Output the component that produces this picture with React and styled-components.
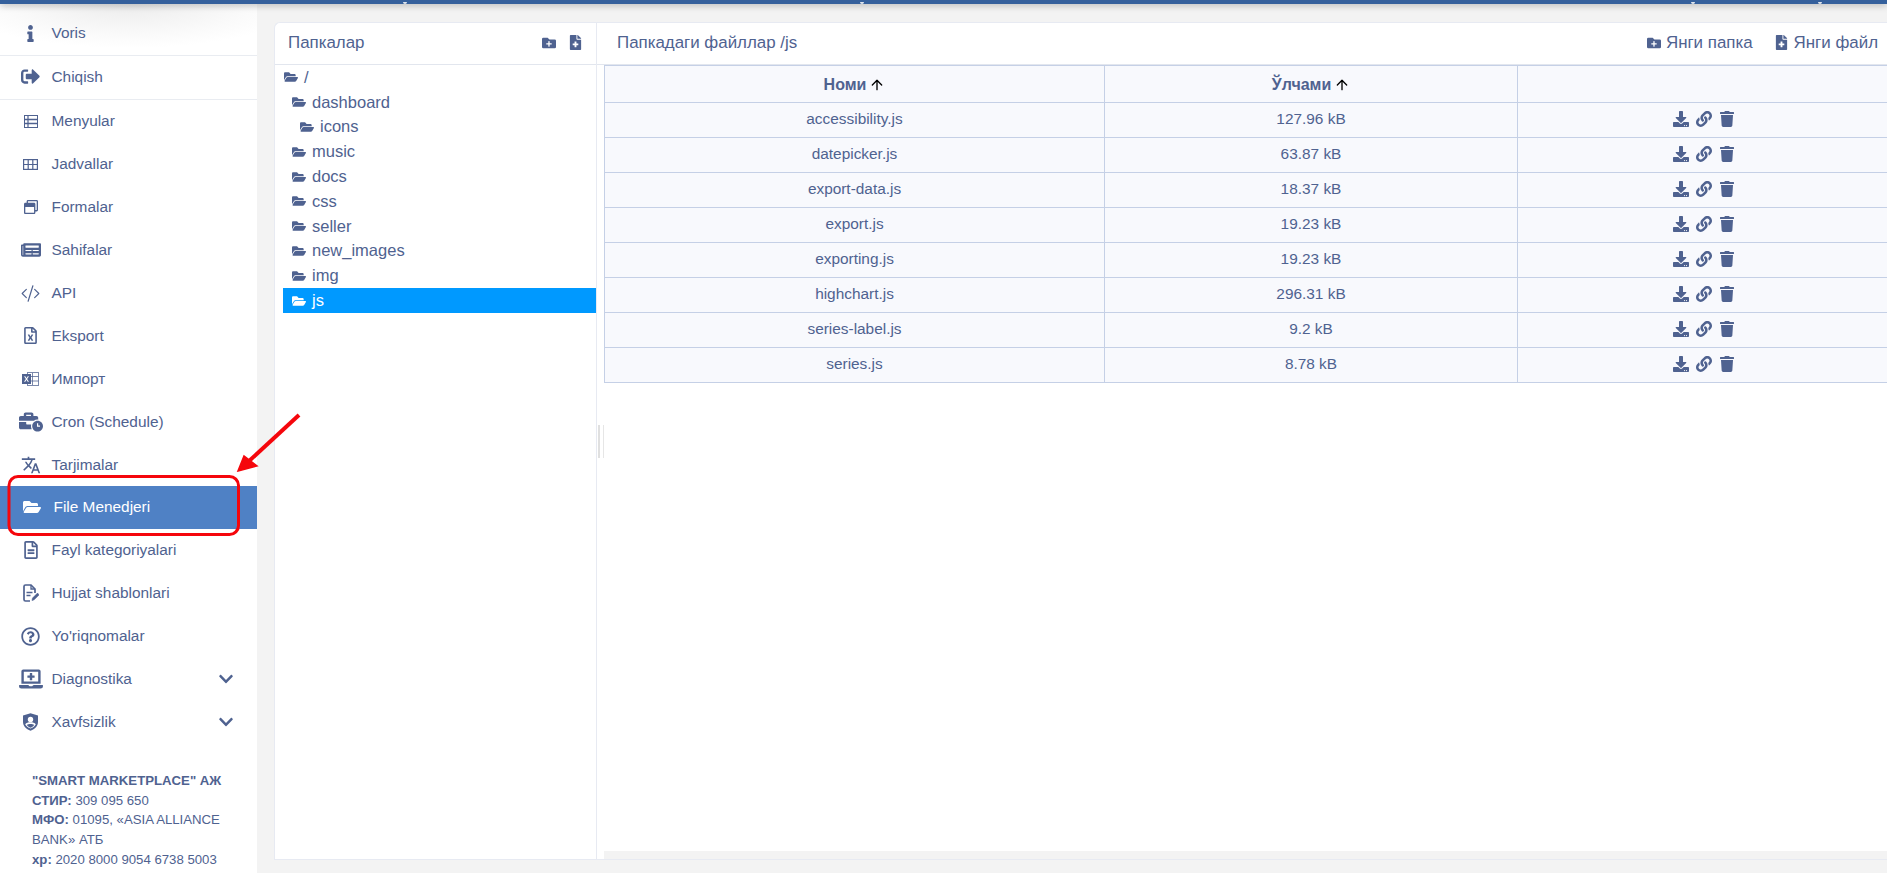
import React from "react";
import styled, { createGlobalStyle } from "styled-components";
import {
  FaInfo, FaRegWindowRestore, FaNewspaper, FaRegFileExcel, FaBusinessTime,
  FaFolderOpen, FaRegFileAlt, FaRegQuestionCircle, FaLaptopMedical, FaChevronDown,
  FaFolderPlus, FaFileMedical, FaDownload, FaLink, FaTrash, FaSignOutAlt,
} from "react-icons/fa";
import { BsCodeSlash } from "react-icons/bs";
import { MdTranslate } from "react-icons/md";
import { LuArrowUp } from "react-icons/lu";

const INK = "#4f6290";

const GlobalStyle = createGlobalStyle`
  html, body { margin: 0; height: 100%; overflow: hidden; background: #f3f3f3; }
  body { font-family: "Liberation Sans", Arial, sans-serif; color: ${INK}; }
  * { box-sizing: border-box; }
`;

const Page = styled.div`
  position: relative;
  display: flex;
  flex-direction: column;
  width: 1887px;
  height: 873px;
  overflow: hidden;
`;

const TopBar = styled.div`
  height: 4px;
  flex: none;
  background: #35609c;
  box-shadow: 0 1px 7px rgba(0, 0, 0, 0.35);
  position: relative;
  z-index: 2;
`;

const TopBarDot = styled.span`
  position: absolute;
  left: ${({ $left }) => $left}px;
  top: 2px;
  width: 4px;
  height: 2px;
  border-radius: 0 0 2px 2px;
  background: #dfe5ee;
`;

const Body = styled.div`
  flex: 1;
  display: flex;
  min-height: 0;
`;

const Sidebar = styled.aside`
  width: 257px;
  flex: none;
  background: #fff;
  display: flex;
  flex-direction: column;
`;

const MenuRow = styled.div`
  display: flex;
  align-items: center;
  flex: none;
  height: ${({ $tall }) => ($tall ? "44px" : "42.9px")};
  padding-left: 18px;
  padding-right: 23px;
  padding-bottom: ${({ $tall }) => ($tall ? "2px" : "0")};
  font-size: 15.4px;
  color: ${({ $active }) => ($active ? "#fff" : INK)};
  background: ${({ $active }) => ($active ? "#4f81c5" : "transparent")};
  border-bottom: ${({ $tall }) => ($tall ? "1px solid #e9ecf1" : "none")};
`;

const TopMenuRow = styled(MenuRow)`
  height: 52px;
  padding-top: 9px;
  background: radial-gradient(ellipse 170px 44px at 50% 0, #ececec 0%, #fafafa 70%, #fff 100%);
`;

const MenuIcon = styled.span`
  width: 33.5px;
  flex: none;
  display: flex;
  justify-content: ${({ $active }) => ($active ? "flex-start" : "center")};
  padding-right: 8px;
  padding-left: ${({ $active }) => ($active ? "5px" : "0")};
  font-size: ${({ $size }) => $size || 16}px;
`;

const MenuLabel = styled.span`
  flex: 1;
  margin-left: ${({ $active }) => ($active ? "2px" : "0")};
`;

const SidebarFooter = styled.div`
  padding: 27.5px 20px 0 32px;
  font-size: 13.2px;
  line-height: 19.75px;
  b { font-weight: 700; }
`;

const Main = styled.main`
  flex: 1;
  min-width: 0;
  padding: 18px 0 13px 17px;
`;

const Card = styled.div`
  height: 100%;
  display: flex;
  background: #fff;
  border: 1px solid #e7eaf2;
  border-right: none;
  border-radius: 6px 0 0 0;
`;

const TreePanel = styled.section`
  width: 322px;
  flex: none;
  border-right: 1px solid #e7eaf2;
`;

const FilesPanel = styled.section`
  position: relative;
  flex: 1;
  min-width: 0;
  display: flex;
  flex-direction: column;
`;

const PanelHeader = styled.header`
  height: 42px;
  flex: none;
  display: flex;
  align-items: center;
  justify-content: space-between;
  font-size: 16.9px;
  border-bottom: 1px solid #e2e6ee;
  padding: ${({ $wide }) => ($wide ? "0 9px 2px 20px" : "0 13px 2px 13px")};
`;

const HeaderTools = styled.div`
  display: flex;
  align-items: center;
  gap: ${({ $wide }) => ($wide ? "21px" : "12px")};
`;

const HeaderTool = styled.span`
  display: flex;
  align-items: center;
  gap: 5px;
  font-size: 16.9px;
`;

const Tree = styled.ul`
  list-style: none;
  margin: 0;
  padding: 0 0 0 8px;
`;

const TreeItem = styled.li`
  display: flex;
  align-items: center;
  gap: 6px;
  height: 24.8px;
  padding-left: ${({ $level }) => $level * 8 + 1}px;
  font-size: 16.5px;
  color: ${({ $selected }) => ($selected ? "#fff" : INK)};
  background: ${({ $selected }) => ($selected ? "#0099ff" : "transparent")};
  svg { font-size: 14px; flex: none; }
`;

const TableWrap = styled.div`
  flex: 1;
  min-height: 0;
  padding-left: 7px;
  overflow: hidden;
`;

const FilesTable = styled.table`
  width: 1287px;
  table-layout: fixed;
  border-collapse: collapse;
  background: #f8f9fd;
  font-size: 15.4px;
  th, td { border: 1px solid #c5d0e6; text-align: center; }
  th { height: 37px; font-size: 16px; font-weight: 700; padding: 1px 0 0; }
  td { height: 35px; padding: 0 0 3px; }
`;

const SortArrow = styled(LuArrowUp)`
  color: #000;
  font-size: 16px;
  vertical-align: -3px;
  margin-left: 3px;
`;

const RowActions = styled.div`
  display: flex;
  justify-content: center;
  align-items: center;
  gap: 7px;
  font-size: 16px;
`;

const BottomScroll = styled.div`
  position: absolute;
  left: 7px;
  right: 0;
  bottom: 0;
  height: 8px;
  background: #f3f3f3;
`;

const Splitter = styled.div`
  position: absolute;
  left: 0;
  top: 402px;
  width: 6px;
  height: 33px;
  border-left: 2px solid #e0e0e0;
  border-right: 1px solid #e6e6e6;
  margin-left: 1px;
`;

const Annotation = styled.svg`
  position: absolute;
  left: 0;
  top: 0;
  pointer-events: none;
  z-index: 3;
`;

const RowsIcon = () => (
  <svg width="14" height="13" viewBox="0 0 14 13" fill="none" stroke="currentColor">
    <rect x="0.5" y="0.5" width="13" height="12" strokeWidth="1" />
    <path d="M0.5 4.5h13M0.5 8.5h13" strokeWidth="1.4" />
    <path d="M4 1v11" strokeWidth="1.2" />
  </svg>
);

const GridIcon = () => (
  <svg width="15" height="11" viewBox="0 0 15 11" fill="none" stroke="currentColor" strokeWidth="1.2">
    <rect x="0.6" y="0.6" width="13.8" height="9.8" />
    <path d="M0.6 5.5h13.8M5.2 0.6v9.8M9.8 0.6v9.8" />
  </svg>
);

const SheetIcon = () => (
  <svg width="17" height="14" viewBox="0 0 17 14" fill="none">
    <rect x="5.5" y="0.5" width="11" height="13" stroke="currentColor" strokeOpacity="0.75" />
    <path d="M10.5 1v12M6 4.5h10.5M6 9h10.5" stroke="currentColor" strokeOpacity="0.75" />
    <rect y="2" width="9" height="10" fill="currentColor" />
    <path d="M2.6 4.3l3.8 5.4M6.4 4.3L2.6 9.7" stroke="#fff" strokeWidth="1.1" />
  </svg>
);

const DocPenIcon = () => (
  <svg width="16" height="18" viewBox="0 0 16 18" fill="none" stroke="currentColor">
    <path d="M12 9V5L8 1H2.5A1.5 1.5 0 0 0 1 2.5v13A1.5 1.5 0 0 0 2.5 17H7" strokeWidth="1.7" />
    <path d="M8 1v4h4" strokeWidth="1.3" />
    <path d="M3.5 8.5h6M3.5 11.5h4" strokeWidth="1.3" />
    <path d="M9 16.5l.5-2.4 5-5 1.6 1.7-5 5z" fill="currentColor" strokeWidth="0.6" />
  </svg>
);

const ShieldIcon = () => (
  <svg width="15" height="18" viewBox="0 0 15 18">
    <path d="M7.5 0.3L15 2.6v6.2c0 4.2-3 7.4-7.5 9C3 16.2 0 13 0 8.8V2.6z" fill="currentColor" />
    <circle cx="7.5" cy="6.5" r="2.7" fill="#fff" />
    <path d="M2.2 11.3c1.2-1.4 3-2 5.3-2s4.100.6 5.300 2c-.8 1.900-2.800 3.400-5.300 4.300-2.500-.9-4.500-2.400-5.300-4.300z" fill="#fff" />
    <path d="M3.800 12c1-.8 2.200-1.100 3.700-1.100s2.700.3 3.700 1.100c-.7 1.100-2 2-3.700 2.700-1.700-.7-3-1.600-3.700-2.700z" fill="currentColor" />
  </svg>
);

const menu = [
  { label: "Menyular", icon: <RowsIcon /> },
  { label: "Jadvallar", icon: <GridIcon /> },
  { label: "Formalar", icon: <FaRegWindowRestore />, size: 14 },
  { label: "Sahifalar", icon: <FaNewspaper />, size: 20 },
  { label: "API", icon: <BsCodeSlash />, size: 19 },
  { label: "Eksport", icon: <FaRegFileExcel />, size: 17 },
  { label: "Импорт", icon: <SheetIcon /> },
  { label: "Cron (Schedule)", icon: <FaBusinessTime />, size: 24 },
  { label: "Tarjimalar", icon: <MdTranslate />, size: 20 },
  { label: "File Menedjeri", icon: <FaFolderOpen />, size: 18, active: true },
  { label: "Fayl kategoriyalari", icon: <FaRegFileAlt />, size: 18 },
  { label: "Hujjat shablonlari", icon: <DocPenIcon /> },
  { label: "Yo'riqnomalar", icon: <FaRegQuestionCircle />, size: 19 },
  { label: "Diagnostika", icon: <FaLaptopMedical />, size: 24, more: true },
  { label: "Xavfsizlik", icon: <ShieldIcon />, more: true },
];

const folders = [
  { name: "/", level: 0 },
  { name: "dashboard", level: 1 },
  { name: "icons", level: 2 },
  { name: "music", level: 1 },
  { name: "docs", level: 1 },
  { name: "css", level: 1 },
  { name: "seller", level: 1 },
  { name: "new_images", level: 1 },
  { name: "img", level: 1 },
  { name: "js", level: 1, selected: true },
];

const files = [
  ["accessibility.js", "127.96 kB"],
  ["datepicker.js", "63.87 kB"],
  ["export-data.js", "18.37 kB"],
  ["export.js", "19.23 kB"],
  ["exporting.js", "19.23 kB"],
  ["highchart.js", "296.31 kB"],
  ["series-label.js", "9.2 kB"],
  ["series.js", "8.78 kB"],
];

export default function App() {
  return (
    <Page>
      <GlobalStyle />
      <TopBar>
        {[403, 860, 1691, 1818].map((left) => (
          <TopBarDot key={left} $left={left} />
        ))}
      </TopBar>
      <Body>
        <Sidebar>
          <TopMenuRow $tall>
            <MenuIcon $size={17}><FaInfo /></MenuIcon>
            <MenuLabel>Voris</MenuLabel>
          </TopMenuRow>
          <MenuRow $tall>
            <MenuIcon $size={19}><FaSignOutAlt /></MenuIcon>
            <MenuLabel>Chiqish</MenuLabel>
          </MenuRow>
          {menu.map((item) => (
            <MenuRow key={item.label} $active={item.active}>
              <MenuIcon $size={item.size} $active={item.active}>{item.icon}</MenuIcon>
              <MenuLabel $active={item.active}>{item.label}</MenuLabel>
              {item.more && <FaChevronDown size={16} />}
            </MenuRow>
          ))}
          <SidebarFooter>
            <b>"SMART MARKETPLACE" АЖ</b><br />
            <b>СТИР:</b> 309 095 650<br />
            <b>МФО:</b> 01095, «ASIA ALLIANCE BANK» АТБ<br />
            <b>хр:</b> 2020 8000 9054 6738 5003
          </SidebarFooter>
        </Sidebar>
        <Main>
          <Card>
            <TreePanel>
              <PanelHeader>
                <span>Папкалар</span>
                <HeaderTools>
                  <FaFolderPlus size={14} />
                  <FaFileMedical size={15} />
                </HeaderTools>
              </PanelHeader>
              <Tree>
                {folders.map((folder) => (
                  <TreeItem key={folder.name} $level={folder.level} $selected={folder.selected}>
                    <FaFolderOpen />
                    {folder.name}
                  </TreeItem>
                ))}
              </Tree>
            </TreePanel>
            <FilesPanel>
              <PanelHeader $wide>
                <span>Папкадаги файллар /js</span>
                <HeaderTools $wide>
                  <HeaderTool><FaFolderPlus size={14} />Янги папка</HeaderTool>
                  <HeaderTool><FaFileMedical size={15} />Янги файл</HeaderTool>
                </HeaderTools>
              </PanelHeader>
              <TableWrap>
                <FilesTable>
                  <colgroup>
                    <col style={{ width: 500 }} />
                    <col style={{ width: 413 }} />
                    <col />
                  </colgroup>
                  <thead>
                    <tr>
                      <th>Номи<SortArrow /></th>
                      <th>Ўлчами<SortArrow /></th>
                      <th />
                    </tr>
                  </thead>
                  <tbody>
                    {files.map(([name, size]) => (
                      <tr key={name}>
                        <td>{name}</td>
                        <td>{size}</td>
                        <td>
                          <RowActions>
                            <FaDownload />
                            <FaLink />
                            <FaTrash />
                          </RowActions>
                        </td>
                      </tr>
                    ))}
                  </tbody>
                </FilesTable>
              </TableWrap>
              <Splitter />
              <BottomScroll />
            </FilesPanel>
          </Card>
        </Main>
      </Body>
      <Annotation width="1887" height="873" viewBox="0 0 1887 873" fill="none">
        <rect x="9" y="476.500" width="229.500" height="58" rx="9" stroke="#f5060c" strokeWidth="3" />
        <path d="M299 415 L248 462" stroke="#f5060c" strokeWidth="4" />
        <path d="M238 471 L257 466 L244 456 Z" fill="#f5060c" stroke="#f5060c" strokeWidth="1.500" />
      </Annotation>
    </Page>
  );
}
